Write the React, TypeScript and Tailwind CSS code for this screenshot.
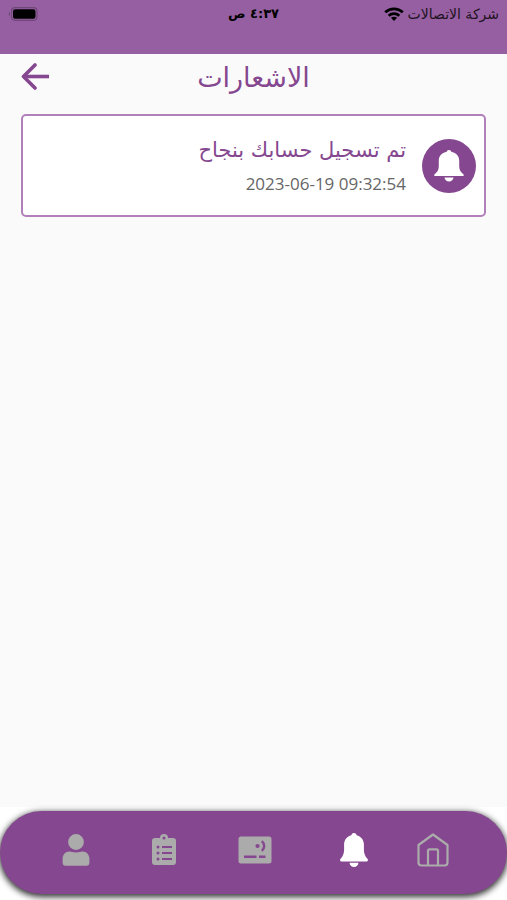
import React from 'react';

interface NotificationItem {
  id: number;
  title: string;
  date: string;
}

interface IconProps {
  className?: string;
}

const notifications: NotificationItem[] = [
  { id: 1, title: 'تم تسجيل حسابك بنجاح', date: '2023-06-19 09:32:54' },
];

const BellIcon = ({ className }: IconProps) => (
  <svg viewBox="0 0 28 34" fill="currentColor" className={className} aria-hidden="true">
    <path d="M14 0c-1.400 0-2.300.9-2.600 2.200C7 3.200 4.100 6.800 4.100 11.300v5.200c0 4-1.100 6.700-3.300 8.900-1.300 1.400-.8 3.200.8 3.200h24.800c1.600 0 2.100-1.800.8-3.200-2.200-2.200-3.300-4.900-3.300-8.900v-5.200c0-4.500-2.900-8.100-7.300-9.100C16.300.9 15.400 0 14 0z" />
    <path d="M9.600 29.800h8.800c0 2.400-2 4.200-4.400 4.200s-4.400-1.800-4.400-4.200z" />
  </svg>
);

const CircleBellIcon = () => (
  <svg viewBox="0 0 30 32" fill="currentColor" className="h-8 w-[30px]" aria-hidden="true">
    <path d="M15 0c-1.300 0-2.200.9-2.500 2.100C8 2.700 4.800 6 4.800 10.400v5.200c0 4-1 6.200-3.400 8-1.900 1.500-1.700 2.500.3 2.500h26.600c2 0 2.200-1 .3-2.500-2.400-1.800-3.400-4-3.400-8v-5.200c0-4.400-3.200-7.700-7.700-8.300C17.200.9 16.300 0 15 0z" />
    <path d="M10.500 27.500h9c-.2 2.200-2 4-4.500 4s-4.300-1.800-4.500-4z" />
  </svg>
);

const HomeIcon = () => (
  <svg viewBox="0 0 32 34" fill="none" stroke="currentColor" strokeWidth="2.200" strokeLinejoin="round" className="h-[34px] w-8" aria-hidden="true">
    <path d="M16 1.500 1.500 12v17.500a3 3 0 0 0 3 3h23a3 3 0 0 0 3-3V12z" />
    <path d="M11 32V17.600a1.200 1.200 0 0 1 1.200-1.200h7.600a1.200 1.200 0 0 1 1.200 1.200V32" />
  </svg>
);

const CardIcon = () => (
  <svg viewBox="0 0 34 28" className="h-7 w-[34px]" aria-hidden="true">
    <rect x="0.500" y="0.500" width="33" height="27" rx="2.500" fill="currentColor" />
    <circle cx="19.500" cy="10" r="2.100" fill="#85478f" />
    <g fill="none" stroke="#85478f" strokeWidth="2.400">
      <path d="M23.800 5.200c3.200 2.700 3.200 7 0 9.700" />
      <path d="M6 20.800h12.500M21 20.800h6.500" />
    </g>
  </svg>
);

const ClipboardIcon = () => (
  <svg viewBox="0 0 24 32" className="h-8 w-6" aria-hidden="true">
    <path fill="currentColor" fillRule="evenodd" d="M3 4h5a4 4 0 0 1 8 0h5a3 3 0 0 1 3 3v21a3 3 0 0 1-3 3H3a3 3 0 0 1-3-3V7a3 3 0 0 1 3-3zm9-1.400a1.500 1.500 0 1 0 0 3 1.500 1.500 0 0 0 0-3z" />
    <g fill="#85478f">
      <circle cx="6" cy="13" r="1.500" />
      <circle cx="6" cy="19" r="1.500" />
      <circle cx="6" cy="25" r="1.500" />
      <path d="M10 12h10v2H10zM10 18h10v2H10zM10 24h10v2H10z" />
    </g>
  </svg>
);

const UserIcon = () => (
  <svg viewBox="0 0 28 32" fill="currentColor" className="h-8 w-7" aria-hidden="true">
    <circle cx="14" cy="8" r="7.900" />
    <path d="M7.500 17.500c2.200 0 3.200 1 6.500 1s4.300-1 6.500-1c4 0 6.900 3.200 6.900 7.200v4c0 1.800-1.200 3-3 3H3.600c-1.800 0-3-1.200-3-3v-4c0-4 2.900-7.200 6.900-7.200z" />
  </svg>
);

const StatusBar = () => (
  <div className="grid h-[54px] grid-cols-[1fr_auto_1fr] items-start bg-[#955fa1] px-2 pt-1 text-black">
    <div className="flex h-5 items-center gap-1">
      <span className="text-[14px] leading-5 text-[#1f1222]">شركة الاتصالات</span>
      <svg viewBox="0 0 20 14" className="h-[14px] w-5" fill="none" stroke="currentColor" strokeWidth="2.800" aria-hidden="true">
        <path d="M1.200 5.300c5-4.700 12.600-4.700 17.600 0" />
        <path d="M4.700 8.700c3-2.700 7.600-2.700 10.600 0" />
        <path d="M6.900 10.800 10 14l3.100-3.200c-1.800-1.500-4.400-1.500-6.200 0z" fill="currentColor" stroke="none" />
      </svg>
    </div>
    <span className="text-[13px] font-bold leading-5">٤:٣٧ ص</span>
    <div className="flex h-5 items-center justify-end">
      <svg viewBox="0 0 30 14" className="h-[14px] w-[30px]" aria-hidden="true">
        <rect x="3.500" y="0.700" width="25.500" height="12.600" rx="3.500" fill="none" stroke="#704779" strokeWidth="1.200" />
        <rect x="5" y="2.200" width="22.500" height="9.600" rx="2.200" fill="#000" />
        <path d="M2 5a2.200 2.200 0 0 0 0 4z" fill="#704779" />
      </svg>
    </div>
  </div>
);

const navItems = [
  { id: 'home', label: 'الرئيسية', icon: <HomeIcon />, active: false },
  { id: 'notifications', label: 'الاشعارات', icon: <BellIcon className="h-[34px] w-7" />, active: true },
  { id: 'card', label: 'البطاقة', icon: <CardIcon />, active: false },
  { id: 'orders', label: 'الطلبات', icon: <ClipboardIcon />, active: false },
  { id: 'profile', label: 'الحساب', icon: <UserIcon />, active: false },
];

const App = () => {
  return (
    <div dir="rtl" className="flex min-h-screen flex-col bg-[#fafafa] font-['DejaVu_Sans','Noto_Sans',sans-serif]">
      <StatusBar />

      {/* Page header */}
      <header className="grid h-[60px] grid-cols-[1fr_auto_1fr] items-start px-5 text-[#85478f]">
        <h1 className="col-start-2 pt-1 text-[27px] leading-10">الاشعارات</h1>
        <button type="button" aria-label="رجوع" className="mt-2 justify-self-end">
          <svg viewBox="0 0 30 28" className="h-7 w-[30px]" fill="none" stroke="currentColor" strokeWidth="3.600" strokeLinecap="round" strokeLinejoin="round" aria-hidden="true">
            <path d="M15 3 3.500 14.500 15 26" />
            <path d="M3.500 14.500h25.500" strokeLinecap="butt" />
          </svg>
        </button>
      </header>

      {/* Notifications list */}
      <main className="flex-1 px-[21px]">
        <ul className="space-y-3">
          {notifications.map((item) => (
            <li key={item.id} className="flex h-[103px] items-center gap-4 rounded-[5px] border-2 border-[#b17fba] bg-white px-2">
              <div className="flex size-[54px] shrink-0 items-center justify-center rounded-full bg-[#85478f] text-white">
                <CircleBellIcon />
              </div>
              <div>
                <h2 className="text-[21px] leading-9 text-[#85478f]">{item.title}</h2>
                <p className="text-right font-['Open_Sans',sans-serif] text-[17px] leading-8 text-[#666]">
                  <time dir="ltr">{item.date}</time>
                </p>
              </div>
            </li>
          ))}
        </ul>
      </main>

      {/* Bottom navigation */}
      <div className="bg-white pb-[6px] pt-1">
        <nav className="grid h-[83px] grid-cols-[72fr_86fr_113fr_68fr_108fr] items-center rounded-full bg-[#85478f] pb-[6px] pl-[22px] pr-[38px] shadow-[0_2px_6px_1px_rgba(0,0,0,0.8)]">
          {navItems.map((item) => (
            <button
              key={item.id}
              type="button"
              aria-label={item.label}
              aria-current={item.active ? 'page' : undefined}
              className={`flex justify-center ${item.active ? 'text-white' : 'text-[#ababab]'}`}
            >
              {item.icon}
            </button>
          ))}
        </nav>
      </div>
    </div>
  );
};

export default App;
